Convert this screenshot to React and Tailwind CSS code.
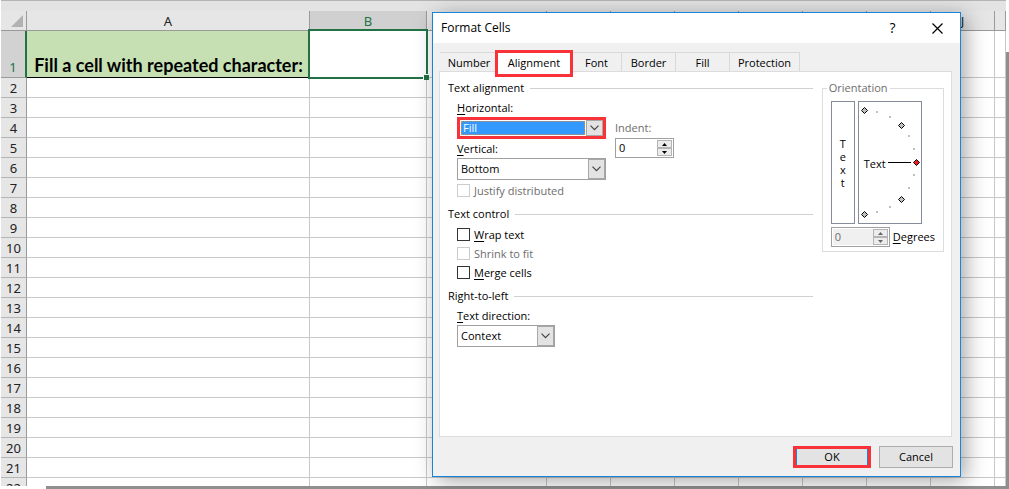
import React from "react";

const columns = [
  { id: "A", title: "A" },
  { id: "B", title: "B" },
  { id: "C" },
  { id: "D" },
  { id: "E" },
  { id: "F" },
  { id: "G" },
  { id: "H" },
  { id: "I" },
  { id: "J", title: "J" },
  { id: "K" },
];
const rows = Array.from({ length: 21 }, (_, i) => i + 2);

function Sheet() {
  return (
    <div className="h-full overflow-hidden bg-white pl-px">
      <div className="h-[11px] border-t border-[#b4b4b4] bg-[#e3e3e3]" />
      <table className="w-full table-fixed border-separate border-spacing-0 font-['Noto_Sans','Open_Sans',sans-serif] text-[13px] leading-4 text-[#222]">
        <colgroup>
          <col className="w-[26px]" />
          <col className="w-[283px]" />
          <col className="w-[117px]" />
          <col className="w-[120px]" />
          <col className="w-16" />
          <col className="w-16" />
          <col className="w-16" />
          <col className="w-16" />
          <col className="w-16" />
          <col className="w-16" />
          <col className="w-16" />
          <col />
        </colgroup>
        <thead>
          <tr className="h-5">
            <th className="border-r border-b border-[#9a9a9a] bg-[#e6e6e6] p-0">
              <svg className="ml-auto mr-[3px] size-3" viewBox="0 0 12 12" aria-hidden="true">
                <path d="M12 0V12H0Z" fill="#b2b2b2" />
              </svg>
            </th>
            {columns.map((c) => (
              <th
                key={c.id}
                scope="col"
                className={
                  c.id === "B"
                    ? "border-r border-b border-[#9a9a9a] bg-[#d0d0d0] p-0 font-normal text-[#217346]"
                    : "border-r border-b border-[#9a9a9a] bg-[#e6e6e6] p-0 font-normal"
                }
              >
                {c.title}
              </th>
            ))}
          </tr>
        </thead>
        <tbody>
          <tr className="h-[47px]">
            <th scope="row" className="border-r-2 border-b border-r-[#217346] border-b-[#9a9a9a] bg-[#d2d2d2] p-0 pb-0.5 align-bottom font-normal text-[#217346]">
              1
            </th>
            <td className="overflow-hidden border-b border-black bg-[#c6e0b4] p-0 text-center align-bottom font-['Lato','Open_Sans',sans-serif] text-[18px] leading-6 font-bold whitespace-nowrap text-black">
              Fill a cell with repeated character:
            </td>
            <td className="relative border-r border-b border-[#c8c8c8] p-0">
              <div className="absolute -top-0.5 -right-0.5 -bottom-0.5 -left-0.5 border-2 border-[#217346]" />
              <div className="absolute -right-[3px] -bottom-[3px] size-1.5 border-t border-l border-white bg-[#217346]" />
            </td>
            {columns.slice(2).map((c) => (
              <td key={c.id} className="border-r border-b border-[#c8c8c8] p-0" />
            ))}
          </tr>
          {rows.map((r) => (
            <tr key={r} className="h-5">
              <th scope="row" className="border-r border-b border-r-[#9a9a9a] border-b-[#b4b4b4] bg-[#e6e6e6] p-0 font-normal">
                {r}
              </th>
              {columns.map((c) => (
                <td key={c.id} className="border-r border-b border-[#c8c8c8] p-0" />
              ))}
            </tr>
          ))}
        </tbody>
      </table>
    </div>
  );
}

function SectionTitle({ children }) {
  return (
    <h2 className="flex h-5 items-center gap-1.5 after:h-px after:flex-1 after:bg-[#d0d0d0]">
      {children}
    </h2>
  );
}

function FieldLabel({ id, hot, children }) {
  return (
    <label htmlFor={id} className="flex h-[19px] items-center">
      <u className="underline-offset-2">{hot}</u>
      {children}
    </label>
  );
}

function Select({ id, value, options, highlighted, className }) {
  return (
    <div
      className={
        (highlighted ? "border-3 border-[#f9323a] p-px " : "border border-[#a0a0a0] ") +
        "relative flex h-[22px] bg-white " +
        className
      }
    >
      <select
        id={id}
        defaultValue={value}
        className={
          (highlighted
            ? "border border-dotted border-[#d98a3c] bg-[#3399ff] pl-px leading-3 text-white "
            : "pl-[3px] ") + "mr-[17px] min-w-0 flex-1 appearance-none rounded-none outline-none"
        }
      >
        {options.map((o) => (
          <option key={o}>{o}</option>
        ))}
      </select>
      <span className="pointer-events-none absolute inset-y-0 right-0 flex w-[17px] items-center justify-center border border-[#a8a8a8] bg-[#e3e3e3]">
        <svg width="9" height="6" viewBox="0 0 9 6" fill="none" stroke="#444" strokeWidth="1.2" aria-hidden="true">
          <path d="M0.5 0.7 4.5 4.7 8.5 0.7" />
        </svg>
      </span>
    </div>
  );
}

function Check({ id, hot, disabled, children }) {
  return (
    <div className="flex h-[19px] items-center gap-1">
      <input
        id={id}
        type="checkbox"
        disabled={disabled}
        className="size-[13px] appearance-none border border-[#333] bg-white checked:bg-[#333] disabled:border-[#cccccc]"
      />
      <label htmlFor={id} className={disabled ? "text-[#6d6d6d]" : ""}>
        {hot && <u className="underline-offset-2">{hot}</u>}
        {children}
      </label>
    </div>
  );
}

function Spinner({ id, disabled }) {
  return (
    <div className="flex h-5 w-[59px] border border-[#a0a0a0] bg-white p-px">
      <input
        id={id}
        type="text"
        inputMode="numeric"
        defaultValue="0"
        disabled={disabled}
        className="min-w-0 flex-1 bg-white pl-0.5 outline-none disabled:bg-[#f0f0f0] disabled:text-[#6d6d6d]"
      />
      <div className="flex w-[15px] flex-col">
        <button type="button" disabled={disabled} aria-label="Increase" className="flex flex-1 items-center justify-center border border-[#b4b4b4] bg-[#ececec] text-black disabled:text-[#666]">
          <svg width="5" height="3" viewBox="0 0 5 3" aria-hidden="true"><path d="M2.5 0 5 3H0Z" fill="currentColor" /></svg>
        </button>
        <button type="button" disabled={disabled} aria-label="Decrease" className="flex flex-1 items-center justify-center border border-[#b4b4b4] bg-[#ececec] text-black disabled:text-[#666]">
          <svg width="5" height="3" viewBox="0 0 5 3" aria-hidden="true"><path d="M0 0H5L2.5 3Z" fill="currentColor" /></svg>
        </button>
      </div>
    </div>
  );
}

const handles = [[6.5, 9.5], [43.5, 24.5], [58.5, 61.5], [43.5, 98.5], [6.5, 113.5]];
const ticks = [[18, 10], [31, 15], [50, 34], [55, 47], [55, 73], [50, 86], [31, 105], [18, 110]];

function Dial() {
  return (
    <div className="relative h-[123px] w-16 border border-[#838c98] bg-white">
      <svg className="absolute -top-px -left-px h-[123px] w-16" viewBox="0 0 64 123" aria-hidden="true">
        {ticks.map(([x, y]) => (
          <rect key={x + "-" + y} x={x} y={y} width="2" height="2" fill="#c0c0c0" />
        ))}
        <path d="M30 61.5H53" stroke="#000" />
        {handles.map(([x, y]) => (
          <path
            key={x + "-" + y}
            d={`M${x} ${y - 3}L${x + 3} ${y}L${x} ${y + 3}L${x - 3} ${y}Z`}
            fill={x === 58.5 ? "#ed1c24" : "#c0c0c0"}
            stroke="#000"
          />
        ))}
      </svg>
      <span className="flex h-full items-center pt-0.5 pl-[5px]">Text</span>
    </div>
  );
}

const tabs = [
  { name: "Number", width: "w-[57px]" },
  { name: "Alignment", width: "w-[78px]" },
  { name: "Font", width: "w-[50px]" },
  { name: "Border", width: "w-[54px]" },
  { name: "Fill", width: "w-[54px]" },
  { name: "Protection", width: "w-[70px]" },
];

function Tabs() {
  return (
    <div role="tablist" className="flex h-[19px] items-stretch">
      {tabs.map((t) =>
        t.name === "Alignment" ? (
          <button key={t.name} type="button" role="tab" aria-selected="true" className={t.width + " relative z-10 -mt-0.5 -mr-px -mb-[6px] -ml-0.5 border-3 border-[#f9323a] bg-white pb-0.5"}>
            {t.name}
          </button>
        ) : (
          <button key={t.name} type="button" role="tab" aria-selected="false" className={t.width + " border-t border-r border-[#d9d9d9] pt-0.5 first:pl-0.5"}>
            {t.name}
          </button>
        )
      )}
    </div>
  );
}

function FormatCells() {
  return (
    <div
      role="dialog"
      aria-labelledby="dialog-title"
      className="absolute top-3 left-[432px] w-[529px] border border-[#1883d7] bg-[#f0f0f0] font-['Open_Sans','Noto_Sans',sans-serif] text-[11px] leading-4 text-black shadow-[5px_4px_20px_rgba(0,0,0,0.35)]"
    >
      <header className="flex h-[30px] items-center bg-white pl-2">
        <h1 id="dialog-title" className="flex-1 text-[12px]">Format Cells</h1>
        <button type="button" aria-label="Help" className="flex h-full w-[45px] items-center justify-center text-[14px] font-medium">?</button>
        <button type="button" aria-label="Close" className="flex h-full w-[45px] items-center justify-center">
          <svg width="11" height="11" viewBox="0 0 11 11" stroke="#000" strokeWidth="1.2" aria-hidden="true">
            <path d="M0.5 0.5 10.5 10.5M10.5 0.5 0.5 10.5" />
          </svg>
        </button>
      </header>
      <div className="px-[7px] pt-[9px] pb-2">
        <Tabs />
        <div role="tabpanel" className="mr-px -ml-px flex min-h-[366px] gap-[9px] border border-[#dcdcdc] bg-white pt-1.5 pr-[7px] pl-2">
          <div className="flex-1">
            <SectionTitle>Text alignment</SectionTitle>
            <div className="flex gap-[9px] pl-[9px]">
              <div className="w-[149px]">
                <FieldLabel id="horizontal" hot="H">orizontal:</FieldLabel>
                <Select id="horizontal" value="Fill" options={["General", "Left (Indent)", "Center", "Right (Indent)", "Fill", "Justify"]} highlighted className="w-full" />
                <FieldLabel id="vertical" hot="V">ertical:</FieldLabel>
                <Select id="vertical" value="Bottom" options={["Top", "Center", "Bottom", "Justify"]} className="w-full" />
                <div className="pt-px">
                  <Check id="justify" disabled>Justify distributed</Check>
                </div>
              </div>
              <div className="pt-5">
                <label htmlFor="indent" className="flex h-5 items-center text-[#6d6d6d]">Indent:</label>
                <Spinner id="indent" />
              </div>
            </div>
            <div className="pt-1">
              <SectionTitle>Text control</SectionTitle>
              <div className="pt-px pl-[9px]">
                <Check id="wrap" hot="W">rap text</Check>
                <Check id="shrink" disabled>Shrink to fit</Check>
                <Check id="merge" hot="M">erge cells</Check>
              </div>
            </div>
            <div className="pt-1">
              <SectionTitle>Right-to-left</SectionTitle>
              <div className="pl-[9px]">
                <FieldLabel id="direction" hot="T">ext direction:</FieldLabel>
                <Select id="direction" value="Context" options={["Context", "Left-to-Right", "Right-to-Left"]} className="w-[98px]" />
              </div>
            </div>
          </div>
          <fieldset className="mt-0.5 w-[121px] self-start border border-[#dcdcdc] px-2 pb-1">
            <legend className="-ml-1 px-0.5 text-[#6d6d6d]">Orientation</legend>
            <div className="flex gap-[3px] pt-[5px]">
              <button type="button" className="flex h-[123px] w-6 flex-col items-center justify-center border border-[#838c98] bg-white leading-[13px]">
                <span>T</span>
                <span>e</span>
                <span>x</span>
                <span>t</span>
              </button>
              <Dial />
            </div>
            <div className="flex items-center gap-[3px] pt-[3px]">
              <Spinner id="degrees" disabled />
              <label htmlFor="degrees"><u className="underline-offset-2">D</u>egrees</label>
            </div>
          </fieldset>
        </div>
        <footer className="flex justify-end gap-2 pt-[9px]">
          <button type="button" className="h-[22px] w-[78px] border-3 border-[#f9323a] bg-[#e3e3e3]">
            <span className="flex h-full items-center justify-center border-x border-[#1883d7]">OK</span>
          </button>
          <button type="button" className="h-[22px] w-[74px] border border-[#adadad] bg-[#e3e3e3]">Cancel</button>
        </footer>
      </div>
    </div>
  );
}

export default function App() {
  return (
    <main className="relative h-screen overflow-hidden bg-white pr-[3px] pb-[3px]">
      <Sheet />
      <div className="absolute right-0 bottom-0 left-[46px] h-[3px] bg-[#8f8f8f]" />
      <div className="absolute top-[52px] right-0 bottom-0 w-[3px] bg-[#8f8f8f]" />
      <FormatCells />
    </main>
  );
}
